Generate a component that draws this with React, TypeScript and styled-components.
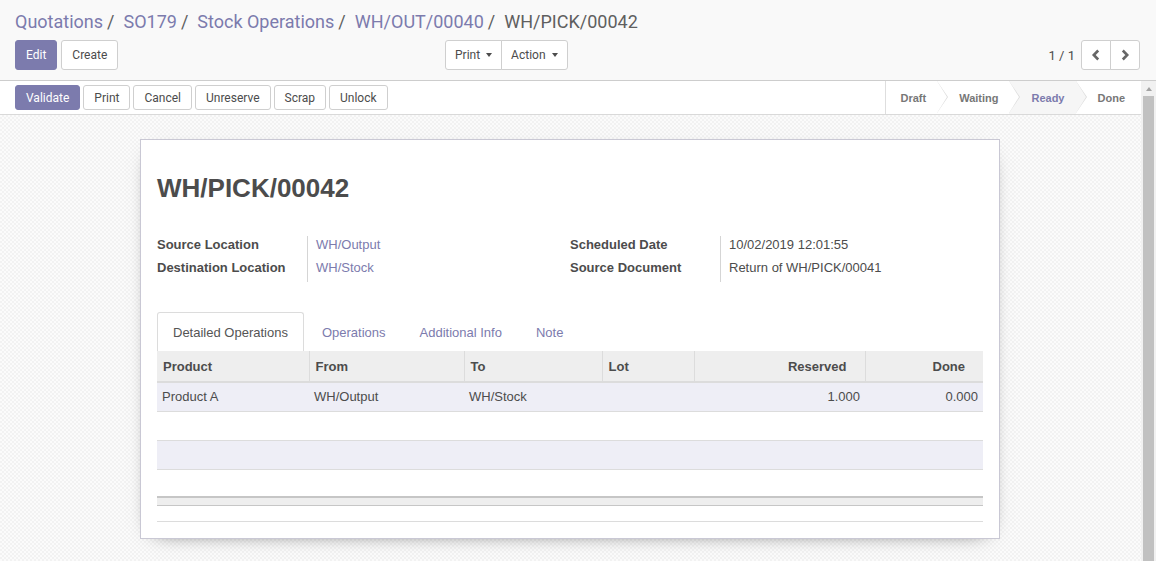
import React from 'react';
import styled, { createGlobalStyle, css } from 'styled-components';

const PURPLE = '#7c7bad';
const TEXT = '#4c4c4c';
const SANS = '"Liberation Sans", Arial, sans-serif';
const UI = 'Roboto, "Liberation Sans", Arial, sans-serif';

const Global = createGlobalStyle`
  html, body { margin: 0; padding: 0; height: 100%; overflow: hidden; }
  body { font-family: ${UI}; color: ${TEXT}; background: #fff; }
  * { box-sizing: border-box; }
`;

const Page = styled.div`
  display: flex;
  flex-direction: column;
  height: 100vh;
`;

const ControlPanel = styled.div`
  flex: none;
  background: #f9f9f9;
  border-bottom: 1px solid #cdcdcd;
  padding: 7px 16px 10px 15px;
`;

const Breadcrumb = styled.ol`
  list-style: none;
  margin: 0;
  padding: 0;
  display: flex;
  font-size: 18px;
  line-height: 30px;
  height: 30px;
`;

const Crumb = styled.li<{ $active?: boolean }>`
  color: ${(p) => (p.$active ? '#5f5f5f' : PURPLE)};
  white-space: nowrap;
`;

const Sep = styled.span`
  color: #5f5f5f;
  margin: 0 9px 0 4px;
`;

const CpRow = styled.div`
  display: flex;
  margin-top: 3px;
  height: 30px;
`;

const CpLeft = styled.div`
  flex: 0 0 50%;
  display: flex;
  justify-content: space-between;
  padding-right: 10px;
`;

const CpRight = styled.div`
  flex: 0 0 50%;
  display: flex;
  justify-content: flex-end;
  align-items: center;
`;

const Buttons = styled.div`
  display: flex;
  gap: 4px;
`;

const Btn = styled.button<{ $primary?: boolean; $small?: boolean; $tight?: boolean }>`
  font-family: ${UI};
  font-size: 12px;
  height: 30px;
  padding: 0 ${(p) => (p.$tight ? 9 : 10)}px;
  border-radius: 3px;
  border: 1px solid ${(p) => (p.$primary ? PURPLE : '#cfcfcf')};
  background: ${(p) => (p.$primary ? PURPLE : '#fff')};
  color: ${(p) => (p.$primary ? '#fff' : '#4c4c4c')};
  display: inline-flex;
  align-items: center;
  white-space: pre;
  cursor: pointer;
  ${(p) =>
    p.$small &&
    css`
      height: 25px;
    `}
`;

const Group = styled.div`
  display: flex;
  & > button {
    border-radius: 0;
  }
  & > button:first-child {
    border-radius: 3px 0 0 3px;
  }
  & > button:last-child {
    border-radius: 0 3px 3px 0;
    margin-left: -1px;
  }
`;

const Caret = styled.span`
  display: inline-block;
  width: 0;
  height: 0;
  margin-left: 3px;
  border-top: 4px solid #4c4c4c;
  border-left: 3.5px solid transparent;
  border-right: 3.5px solid transparent;
`;

const Pager = styled.div`
  display: flex;
  align-items: center;
  gap: 6px;
  font-size: 13px;
  color: ${TEXT};
`;

const PagerBtn = styled.button`
  width: 30px;
  height: 30px;
  border: 1px solid #cfcfcf;
  background: #fff;
  display: flex;
  align-items: center;
  justify-content: center;
  padding: 0;
  cursor: pointer;
  &:first-child {
    border-radius: 3px 0 0 3px;
  }
  &:last-child {
    border-radius: 0 3px 3px 0;
    margin-left: -1px;
  }
`;

const Chevron = ({ dir }: { dir: 'l' | 'r' }) => (
  <svg width="10" height="12" viewBox="0 0 10 12">
    <path
      d={dir === 'l' ? 'M7.2 1.5 L2.8 6 L7.2 10.5' : 'M2.8 1.5 L7.2 6 L2.8 10.5'}
      fill="none"
      stroke="#666"
      strokeWidth="2.6"
    />
  </svg>
);

const FormArea = styled.div`
  flex: 1;
  min-height: 0;
  display: flex;
  overflow: hidden;
`;

const FormContent = styled.div`
  flex: 1;
  min-width: 0;
`;

const ScrollRail = styled.div`
  flex: none;
  width: 15px;
  background: #f1f1f1;
  display: flex;
  flex-direction: column;
`;

const RailArrow = styled.div`
  height: 15px;
  display: flex;
  align-items: center;
  justify-content: center;
  &::before {
    content: '';
    width: 0;
    height: 0;
    border-bottom: 4px solid #a3a3a3;
    border-left: 3.5px solid transparent;
    border-right: 3.5px solid transparent;
  }
`;

const RailThumb = styled.div`
  flex: 1;
  margin: 0 2px;
  background: #c1c1c1;
`;

const StatusBar = styled.div`
  display: flex;
  justify-content: space-between;
  align-items: stretch;
  height: 34px;
  background: #fff;
  border-bottom: 1px solid #d9d9d9;
  padding-left: 15px;
`;

const StatusButtons = styled.div`
  display: flex;
  align-items: center;
  gap: 3px;
`;

const Steps = styled.div`
  display: flex;
  border-left: 1px solid #dedede;
  margin-right: 1px;
`;

const Step = styled.div<{ $current?: boolean; $first?: boolean; $last?: boolean }>`
  position: relative;
  display: flex;
  align-items: center;
  font-family: ${SANS};
  font-size: 11px;
  font-weight: bold;
  color: ${(p) => (p.$current ? PURPLE : '#777')};
  background: ${(p) => (p.$current ? '#f6f6f6' : '#fff')};
  padding: 0 ${(p) => (p.$last ? 15 : 11)}px 0 ${(p) => (p.$first ? 14 : 22)}px;
  ${(p) =>
    !p.$last &&
    css`
      &::before,
      &::after {
        content: '';
        position: absolute;
        top: 0;
        width: 0;
        height: 0;
        border-top: 16.5px solid transparent;
        border-bottom: 16.5px solid transparent;
      }
      &::before {
        right: -11px;
        border-left: 11px solid #dcdcdc;
        z-index: 1;
      }
      &::after {
        right: -10px;
        border-left: 10px solid ${p.$current ? '#f6f6f6' : '#fff'};
        z-index: 2;
      }
    `}
`;

const SheetBg = styled.div`
  padding: 24px 1px 83px 0;
  background-color: #f8f8f8;
  background-image: repeating-conic-gradient(#f2f2f2 0 25%, #fbfbfb 0 50%);
  background-size: 4px 4px;
`;

const Sheet = styled.div`
  width: 860px;
  margin: 0 auto;
  background: #fff;
  border: 1px solid #c9c8d4;
  box-shadow: 0 5px 20px -15px #000;
  padding: 16px;
  font-family: ${SANS};
  font-size: 13px;
  color: ${TEXT};
`;

const Title = styled.h1`
  margin: 17px 0 0;
  font-size: 26px;
  line-height: 31px;
  font-weight: bold;
  color: ${TEXT};
`;

const Groups = styled.div`
  display: grid;
  grid-template-columns: 1fr 1fr;
  margin-top: 32px;
`;

const FieldGrid = styled.div`
  display: grid;
  grid-template-columns: 150px 1fr;
  grid-auto-rows: 23px;
`;

const Label = styled.div`
  font-weight: bold;
  line-height: 17px;
`;

const Value = styled.div<{ $link?: boolean }>`
  border-left: 1px solid #d5d5d5;
  padding-left: 8px;
  line-height: 17px;
  color: ${(p) => (p.$link ? PURPLE : TEXT)};
`;

const Tabs = styled.ul`
  list-style: none;
  margin: 30px 0 0;
  padding: 0;
  display: flex;
  height: 39px;
`;

const Tab = styled.li<{ $active?: boolean }>`
  height: 39px;
  padding: 0 15px;
  margin-right: 2px;
  display: flex;
  align-items: center;
  border: 1px solid ${(p) => (p.$active ? '#dcdcdc' : 'transparent')};
  border-bottom: none;
  border-radius: 3px 3px 0 0;
  color: ${(p) => (p.$active ? '#555' : PURPLE)};
  background: #fff;
`;

const Table = styled.table`
  width: 100%;
  border-collapse: collapse;
  table-layout: fixed;
  font-size: 13px;
`;

const Th = styled.th<{ $right?: boolean }>`
  height: 31px;
  background: #eee;
  border-bottom: 2px solid #dcdcdc;
  border-left: 1px solid #dcdcdc;
  padding: 0 ${(p) => (p.$right ? 18 : 6)}px 0 6px;
  text-align: ${(p) => (p.$right ? 'right' : 'left')};
  font-weight: bold;
  color: ${TEXT};
  &:first-child {
    border-left: none;
  }
`;

const Tr = styled.tr<{ $striped?: boolean }>`
  height: 29px;
  background: ${(p) => (p.$striped ? '#eeeef6' : '#fff')};
  border-bottom: 1px solid #dcdcdc;
  &:last-child {
    height: 28px;
    border-bottom: none;
  }
`;

const Td = styled.td<{ $right?: boolean }>`
  padding: 0 5px;
  text-align: ${(p) => (p.$right ? 'right' : 'left')};
  color: ${TEXT};
`;

const TFootRow = styled.tr`
  height: 8px;
  background: #eee;
  border-top: 2px solid #c6c6c6;
  border-bottom: 1px solid #c6c6c6;
`;

const TableTail = styled.div`
  height: 16px;
  border-bottom: 1px solid #dcdcdc;
`;

const cols = [152, 155, 138, 92, 171, 118];

export default function App() {
  return (
    <Page>
      <Global />
      <ControlPanel>
        <Breadcrumb>
          <Crumb>Quotations<Sep>/</Sep></Crumb>
          <Crumb>SO179<Sep>/</Sep></Crumb>
          <Crumb>Stock Operations<Sep>/</Sep></Crumb>
          <Crumb>WH/OUT/00040<Sep>/</Sep></Crumb>
          <Crumb $active>WH/PICK/00042</Crumb>
        </Breadcrumb>
        <CpRow>
          <CpLeft>
            <Buttons>
              <Btn $primary>Edit</Btn>
              <Btn>Create</Btn>
            </Buttons>
            <Group>
              <Btn $tight>
                Print <Caret />
              </Btn>
              <Btn $tight>
                Action <Caret />
              </Btn>
            </Group>
          </CpLeft>
          <CpRight>
            <Pager>
              <span>1 / 1</span>
              <Group>
                <PagerBtn>
                  <Chevron dir="l" />
                </PagerBtn>
                <PagerBtn>
                  <Chevron dir="r" />
                </PagerBtn>
              </Group>
            </Pager>
          </CpRight>
        </CpRow>
      </ControlPanel>
      <FormArea>
        <FormContent>
          <StatusBar>
            <StatusButtons>
              <Btn $small $primary>Validate</Btn>
              <Btn $small>Print</Btn>
              <Btn $small>Cancel</Btn>
              <Btn $small>Unreserve</Btn>
              <Btn $small>Scrap</Btn>
              <Btn $small>Unlock</Btn>
            </StatusButtons>
            <Steps>
              <Step $first>Draft</Step>
              <Step>Waiting</Step>
              <Step $current>Ready</Step>
              <Step $last>Done</Step>
            </Steps>
          </StatusBar>
          <SheetBg>
            <Sheet>
              <Title>WH/PICK/00042</Title>
              <Groups>
                <FieldGrid>
                  <Label>Source Location</Label>
                  <Value $link>WH/Output</Value>
                  <Label>Destination Location</Label>
                  <Value $link>WH/Stock</Value>
                </FieldGrid>
                <FieldGrid>
                  <Label>Scheduled Date</Label>
                  <Value>10/02/2019 12:01:55</Value>
                  <Label>Source Document</Label>
                  <Value>Return of WH/PICK/00041</Value>
                </FieldGrid>
              </Groups>
              <Tabs>
                <Tab $active>Detailed Operations</Tab>
                <Tab>Operations</Tab>
                <Tab>Additional Info</Tab>
                <Tab>Note</Tab>
              </Tabs>
              <Table>
                <colgroup>
                  {cols.map((w, i) => (
                    <col key={i} style={{ width: w }} />
                  ))}
                </colgroup>
                <thead>
                  <tr>
                    <Th>Product</Th>
                    <Th>From</Th>
                    <Th>To</Th>
                    <Th>Lot</Th>
                    <Th $right>Reserved</Th>
                    <Th $right>Done</Th>
                  </tr>
                </thead>
                <tbody>
                  <Tr $striped>
                    <Td>Product A</Td>
                    <Td>WH/Output</Td>
                    <Td>WH/Stock</Td>
                    <Td></Td>
                    <Td $right>1.000</Td>
                    <Td $right>0.000</Td>
                  </Tr>
                  <Tr>
                    <Td colSpan={6}></Td>
                  </Tr>
                  <Tr $striped>
                    <Td colSpan={6}></Td>
                  </Tr>
                  <Tr>
                    <Td colSpan={6}></Td>
                  </Tr>
                </tbody>
                <tfoot>
                  <TFootRow>
                    <td colSpan={6}></td>
                  </TFootRow>
                </tfoot>
              </Table>
              <TableTail />
            </Sheet>
          </SheetBg>
        </FormContent>
        <ScrollRail>
          <RailArrow />
          <RailThumb />
        </ScrollRail>
      </FormArea>
    </Page>
  );
}
